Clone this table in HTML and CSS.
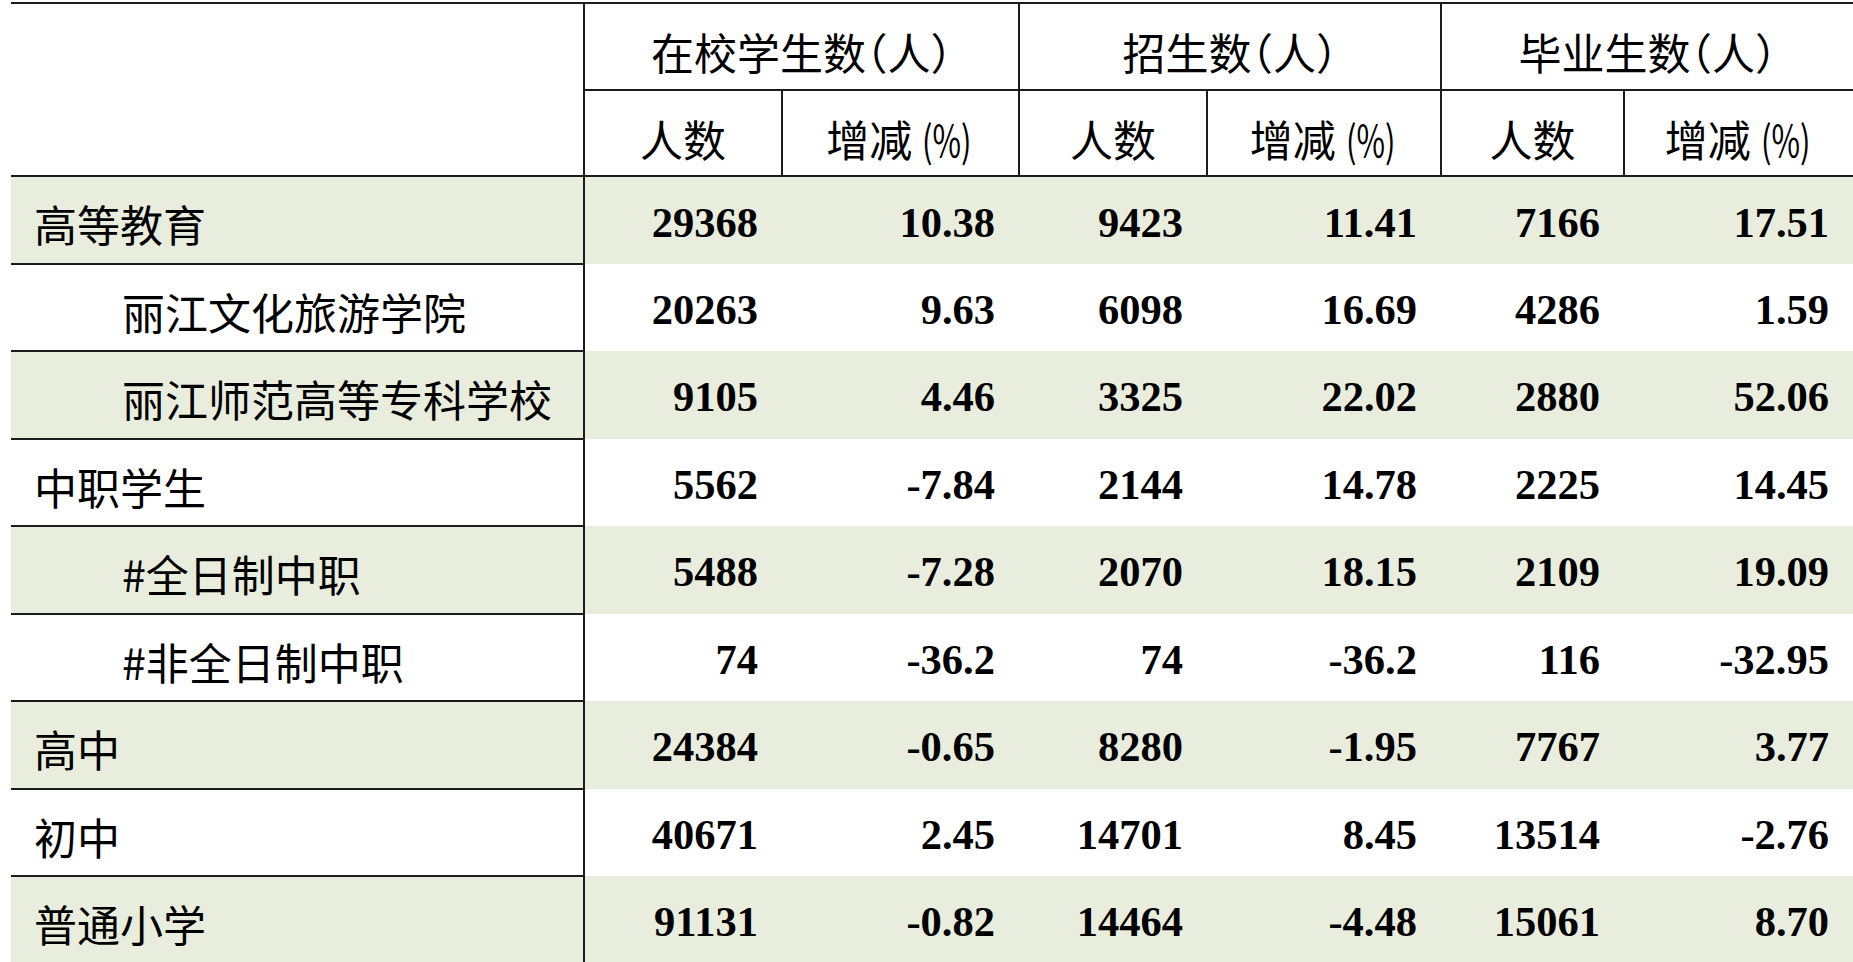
FILE: index.html
```html
<!DOCTYPE html>
<html lang="zh-CN">
<head>
<meta charset="utf-8">
<title>教育统计</title>
<link rel="stylesheet" href="styles.css">
</head>
<body>
<table class="stats">
  <colgroup>
    <col class="c-label">
    <col class="c2"><col class="c3">
    <col class="c4"><col class="c5">
    <col class="c6"><col class="c7">
  </colgroup>
  <thead>
    <tr class="h1">
      <th class="corner" rowspan="2"></th>
      <th colspan="2">在校学生数（人）</th>
      <th colspan="2">招生数（人）</th>
      <th colspan="2">毕业生数（人）</th>
    </tr>
    <tr class="h2">
      <th>人数</th><th>增减<span class="pct">(%)</span></th>
      <th>人数</th><th>增减<span class="pct">(%)</span></th>
      <th>人数</th><th>增减<span class="pct">(%)</span></th>
    </tr>
  </thead>
  <tbody>
    <tr class="band">
      <td class="label">高等教育</td>
      <td>29368</td><td>10.38</td><td>9423</td><td>11.41</td><td>7166</td><td>17.51</td>
    </tr>
    <tr>
      <td class="label sub">丽江文化旅游学院</td>
      <td>20263</td><td>9.63</td><td>6098</td><td>16.69</td><td>4286</td><td>1.59</td>
    </tr>
    <tr class="band">
      <td class="label sub">丽江师范高等专科学校</td>
      <td>9105</td><td>4.46</td><td>3325</td><td>22.02</td><td>2880</td><td>52.06</td>
    </tr>
    <tr>
      <td class="label">中职学生</td>
      <td>5562</td><td>-7.84</td><td>2144</td><td>14.78</td><td>2225</td><td>14.45</td>
    </tr>
    <tr class="band">
      <td class="label sub">#全日制中职</td>
      <td>5488</td><td>-7.28</td><td>2070</td><td>18.15</td><td>2109</td><td>19.09</td>
    </tr>
    <tr>
      <td class="label sub">#非全日制中职</td>
      <td>74</td><td>-36.2</td><td>74</td><td>-36.2</td><td>116</td><td>-32.95</td>
    </tr>
    <tr class="band">
      <td class="label">高中</td>
      <td>24384</td><td>-0.65</td><td>8280</td><td>-1.95</td><td>7767</td><td>3.77</td>
    </tr>
    <tr>
      <td class="label">初中</td>
      <td>40671</td><td>2.45</td><td>14701</td><td>8.45</td><td>13514</td><td>-2.76</td>
    </tr>
    <tr class="band">
      <td class="label last">普通小学</td>
      <td>91131</td><td>-0.82</td><td>14464</td><td>-4.48</td><td>15061</td><td>8.70</td>
    </tr>
  </tbody>
</table>
</body>
</html>
```
FILE: styles.css
```css
html, body {
  margin: 0;
  padding: 0;
  background: #ffffff;
}

body {
  overflow: hidden;
  width: 1853px;
  height: 962px;
}

.stats {
  margin: 2px 0 0 11px;
  width: 1842px;
  table-layout: fixed;
  border-collapse: collapse;
  color: #000;
}

.c-label { width: 573px; }
.c2 { width: 198px; }
.c3 { width: 237px; }
.c4 { width: 188px; }
.c5 { width: 234px; }
.c6 { width: 183px; }
.c7 { width: 229px; }

.stats th {
  font-family: "Noto Sans CJK SC", "Noto Sans", sans-serif;
  font-weight: 400;
  font-size: 43px;
  line-height: 50px;
  text-align: center;
  vertical-align: top;
  padding: 22px 0 0;
  border: 2px solid #1c1c1c;
  white-space: nowrap;
  font-feature-settings: "halt" 1;
}

.stats th .pct {
  display: inline-block;
  margin-left: 10px;
  margin-right: -16px;
  transform: scaleX(0.72);
  transform-origin: left center;
}

.stats tr.h1 { height: 87px; }
.stats tr.h2 { height: 86px; }

.stats th.corner {
  border-left: none;
}

.stats tr.h1 th:last-child,
.stats tr.h2 th:last-child {
  border-right: none;
}

.stats tbody tr {
  height: 87.5px;
}

.stats tbody tr.band {
  background: #e9eddd;
}

.stats td {
  font-family: "Liberation Serif", "Times New Roman", serif;
  font-weight: 700;
  font-size: 42.5px;
  line-height: 50px;
  text-align: right;
  vertical-align: top;
  padding: 21px 24px 0 0;
  white-space: nowrap;
  border: none;
}

.stats td.label {
  font-family: "Noto Sans CJK SC", "Noto Sans", sans-serif;
  font-weight: 400;
  font-size: 43px;
  text-align: left;
  padding: 21px 0 0 23px;
  border-bottom: 2px solid #1c1c1c;
  border-right: 2px solid #1c1c1c;
}

.stats td.label.sub {
  padding-left: 111px;
}

.stats td.label.last {
  border-bottom: none;
}
```
